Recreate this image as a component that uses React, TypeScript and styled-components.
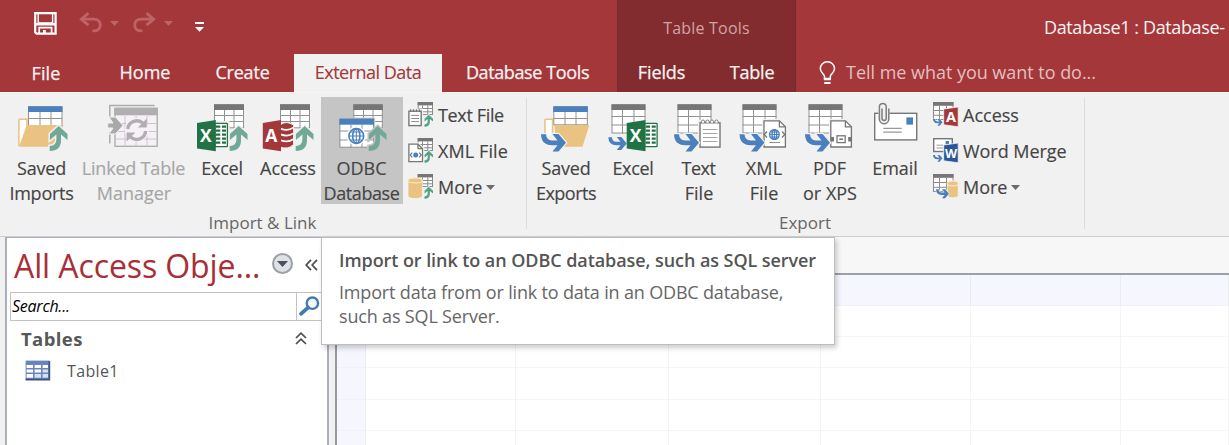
import React, { ReactNode } from 'react';
import styled, { createGlobalStyle, css } from 'styled-components';

const GlobalStyle = createGlobalStyle`
  * { box-sizing: border-box; }
  html, body { margin: 0; background: #fff; overflow: hidden; }
  body { font-family: "Open Sans", "Noto Sans", sans-serif; font-size: 18px; color: #444; }
  svg { display: block; overflow: visible; flex: none; }
`;

const RED = '#a4373a';
const GREY = '#767676';
const BLUE = '#4a80bd';
const GREEN = '#72a897';
const TAN = '#eac282';

const Window = styled.div`
  position: relative;
  width: 1229px;
  height: 445px;
  display: flex;
  flex-direction: column;
  overflow: hidden;
  background: #f1f1f1;
`;

/* ---------- title bar and tabs ---------- */
const Header = styled.header`
  display: grid;
  grid-template-columns: 617px 179px 1fr;
  height: 92px;
  flex: none;
  color: #fbf3f3;
  background: ${RED};
`;
const HeaderSection = styled.div<{ $context?: boolean }>`
  display: flex;
  flex-direction: column;
  ${(p) => p.$context && css`
    background: #822c2f;
    border-left: 1px solid #76282b;
    border-right: 1px solid #76282b;
  `}
`;
const TitleRow = styled.div`
  display: flex;
  height: 54px;
  line-height: 55px;
  white-space: nowrap;
`;
const QuickAccess = styled(TitleRow)`
  padding: 12px 0 0 34px;
  svg { margin-right: 8px; }
`;
const ContextTitle = styled(TitleRow)`
  justify-content: center;
  font-size: 16px;
  letter-spacing: 0.2px;
  line-height: 56px;
  color: #d3a3a4;
`;
const DocTitle = styled(TitleRow)`
  padding-left: 248px;
  letter-spacing: -0.38px;
`;
const TabRow = styled.nav`
  display: flex;
  height: 38px;
`;
const Tab = styled.div<{ $w: number; $ls?: number; $active?: boolean; $gap?: number; $drop?: number }>`
  flex: none;
  width: ${(p) => p.$w}px;
  margin-right: ${(p) => p.$gap ?? 0}px;
  padding-top: ${(p) => p.$drop ?? 0}px;
  letter-spacing: ${(p) => p.$ls ?? 0}px;
  line-height: 37px;
  text-align: center;
  white-space: nowrap;
  -webkit-text-stroke: ${(p) => (p.$active ? 0.1 : 0.25)}px;
  ${(p) => p.$active && css`
    background: #f1f1f1;
    color: ${RED};
  `}
`;
const TellMe = styled.div`
  display: flex;
  align-items: center;
  gap: 10px;
  padding-left: 23px;
  line-height: 37px;
  letter-spacing: -0.03px;
  color: #e3bfc0;
  white-space: nowrap;
`;

/* ---------- ribbon ---------- */
const Ribbon = styled.section`
  display: flex;
  height: 145px;
  flex: none;
  padding-top: 4px;
  background: #f1f1f1;
  border-top: 1px solid #f8f4f4;
  border-bottom: 1px solid #cfcfcf;
`;
const Group = styled.div<{ $w: number }>`
  width: ${(p) => p.$w}px;
  display: flex;
  flex-direction: column;
`;
const GroupItems = styled.div`
  display: flex;
  height: 114px;
`;
const GroupLabel = styled.div`
  padding-right: 1px;
  text-align: center;
  font-size: 17px;
  line-height: 24px;
  color: #666;
`;
const Separator = styled.div`
  width: 1px;
  height: 131px;
  margin-top: 1px;
  background: #dcdcdc;
`;
const LargeButton = styled.div<{ $w: number; $before?: number; $pressed?: boolean; $disabled?: boolean }>`
  width: ${(p) => p.$w}px;
  height: 107px;
  margin-left: ${(p) => p.$before ?? 0}px;
  padding-top: 7px;
  display: flex;
  flex-direction: column;
  align-items: center;
  background: ${(p) => (p.$pressed ? '#c5c5c5' : 'transparent')};
  color: ${(p) => (p.$disabled ? '#a6a6a6' : '#444')};
  svg { margin-bottom: 4px; }
`;
const Label = styled.span<{ $ls?: number; $end?: number }>`
  height: 25px;
  padding-right: ${(p) => p.$end ?? 0}px;
  line-height: 25px;
  white-space: nowrap;
  letter-spacing: ${(p) => p.$ls ?? 0}px;
  -webkit-text-stroke: 0.15px;
`;
const SmallColumn = styled.div<{ $before: number }>`
  display: flex;
  flex-direction: column;
  margin-left: ${(p) => p.$before}px;
`;
const SmallButton = styled.div`
  display: flex;
  align-items: center;
  gap: 4px;
  height: 36px;
`;

/* ---------- body ---------- */
const Body = styled.main`
  display: flex;
  flex: 1;
  min-height: 0;
`;
const NavPane = styled.aside`
  width: 324px;
  margin-left: 5px;
  background: #fff;
  border: 2px solid #a9afba;
  border-top-width: 1px;
  border-bottom: 0;
`;
const NavTitle = styled.div`
  display: flex;
  align-items: center;
  height: 54px;
  padding-left: 7px;
  color: #a92f37;
  font-size: 32px;
`;
const NavName = styled.span`
  width: 258px;
  letter-spacing: -0.1px;
  white-space: nowrap;
`;
const CircleButton = styled.span`
  display: grid;
  place-items: center;
  width: 21px;
  height: 21px;
  margin: -3px 12px 0 0;
  border: 2px solid #9a9fa8;
  border-radius: 50%;
  background: #dfe1e5;
`;
const SearchBox = styled.div`
  display: flex;
  height: 29px;
  margin-left: 3px;
  border: 1px solid #c3c3c3;
  border-right: 0;
`;
const SearchField = styled.span`
  width: 286px;
  padding-left: 1px;
  border-right: 1px solid #c3c3c3;
  color: #000;
  font-size: 16px;
  font-style: italic;
  letter-spacing: -0.25px;
  line-height: 26px;
`;
const SearchButton = styled.span`
  padding: 3px 0 0 2px;
`;
const NavGroup = styled.div`
  display: flex;
  align-items: center;
  justify-content: space-between;
  height: 34px;
  padding: 0 20px 0 14px;
  font-size: 18.5px;
  font-weight: 700;
  letter-spacing: 0.4px;
  color: #585858;
`;
const NavItem = styled.div`
  display: flex;
  align-items: center;
  gap: 17px;
  height: 31px;
  padding-left: 18px;
  font-size: 16px;
  letter-spacing: 0.35px;
  color: #555;
`;
const Sheet = styled.section`
  flex: 1;
  margin-left: 6px;
  display: flex;
  flex-direction: column;
  border-left: 2px solid #9299a2;
`;
const SheetBar = styled.div`
  height: 36px;
  flex: none;
  background: #f7f7f7;
`;
const Grid = styled.div`
  flex: 1;
  display: grid;
  grid-template-columns: 29px 150px 153px 152px 150px 150px 1fr;
  grid-template-rows: 31px repeat(5, 31.2px);
  border-top: 2px solid #9aa1a9;
  overflow: hidden;
`;
const Cell = styled.span<{ $head: boolean }>`
  background: ${(p) => (p.$head ? '#f6f7fe' : '#fff')};
  border-right: 1px solid ${(p) => (p.$head ? '#ebecf0' : '#f4f4f4')};
  border-bottom: 1px solid ${(p) => (p.$head ? '#f0f1f6' : '#f5f5f5')};
`;
const Tooltip = styled.div`
  position: absolute;
  left: 321px;
  top: 237px;
  width: 514px;
  height: 108px;
  padding: 10px 0 0 17px;
  background: #fff;
  border: 1px solid #bebebe;
  box-shadow: 2px 3px 5px rgba(0, 0, 0, 0.2);
  color: #666;
  white-space: nowrap;
`;
const TooltipTitle = styled.div`
  font-weight: 600;
  color: #555;
  letter-spacing: -0.07px;
  line-height: 24px;
  margin-bottom: 9px;
`;
const TooltipText = styled.div`
  line-height: 23.5px;
  letter-spacing: -0.17px;
`;

/* ---------- icon parts ---------- */
const Large = ({ children }: { children: ReactNode }) => (
  <svg width="52" height="48" viewBox="0 0 52 48" fill="none">{children}</svg>
);
const Small = ({ children }: { children: ReactNode }) => (
  <svg width="26" height="26" viewBox="0 0 26 26" fill="none">{children}</svg>
);
type GridProps = { x: number; y: number; w: number; h: number; head: number; cols: number[]; rows: number[]; color?: string; line?: string };
const TableShape = ({ x, y, w, h, head, cols, rows, color = GREY, line = '#929292' }: GridProps) => (
  <g>
    <rect x={x + 0.5} y={y + 0.5} width={w - 1} height={h - 1} fill="#fff" stroke={line} />
    {cols.map((c) => <path key={c} d={`M${c} ${y + head}V${y + h}`} stroke={line} />)}
    {rows.map((r) => <path key={r} d={`M${x} ${r}H${x + w}`} stroke={line} />)}
    <rect x={x} y={y} width={w} height={head} fill={color} />
  </g>
);
const UpArrow = ({ x = 42.7, halo = '#f1f1f1', s = 1, y = 22, color = GREEN }: { x?: number; y?: number; halo?: string; s?: number; color?: string }) => {
  const d = 'M-9 24.6V20Q-2.3 19.8 -2.3 13.6V8.6L-8.8 14V8L0 0L8.8 8V14L2.3 8.6V14Q2.3 25 -9 25Z';
  return (
    <g transform={`translate(${x} ${y}) scale(${s})`}>
      <path d={d} stroke={halo} strokeWidth={3} />
      <path d={d} fill={color} />
    </g>
  );
};
const RightArrow = ({ x = 1, y = 30, s = 1, halo = '#f1f1f1' }: { x?: number; y?: number; s?: number; halo?: string }) => {
  const d = 'M0 0.3H5Q5.4 6.4 11 6.4H16.5L11.5 0H17.5L25 8.7L17.5 17.5H11.5L16.5 11.2H11Q0.4 11.2 0 0.3Z';
  return (
    <g transform={`translate(${x} ${y}) scale(${s})`}>
      <path d={d} stroke={halo} strokeWidth={2.4} />
      <path d={d} fill={BLUE} />
    </g>
  );
};
const Globe = ({ x, y, r }: { x: number; y: number; r: number }) => (
  <g transform={`translate(${x} ${y}) scale(${r / 8})`} stroke={BLUE} strokeWidth={8 / r + 0.6}>
    <circle r="7.4" fill="#fff" />
    <ellipse rx="3.6" ry="7.4" />
    <path d="M0 -7.4V7.4M-7.4 0H7.4M-6.2 -4H6.2M-6.2 4H6.2" strokeWidth={8 / r} />
  </g>
);
const Letter = ({ x, y, size, children }: { x: number; y: number; size: number; children: string }) => (
  <text x={x} y={y} fontSize={size} fontWeight="700" fill="#fff" textAnchor="middle">{children}</text>
);
const ExcelLogo = ({ x = 0 }: { x?: number }) => (
  <g transform={`translate(${x} 0)`}>
    <rect x="18" y="17" width="15.5" height="28" fill="#f1f1f1" />
    <rect x="19" y="19.3" width="12.4" height="23.4" rx="0.8" fill="#fff" stroke="#217346" strokeWidth="1.3" />
    <path d="M20 22.6H24.3M20 26.6H24.3M20 30.6H24.3M20 34.6H24.3M20 38.6H24.3M26 22.6H30M26 26.6H30M26 30.6H30M26 34.6H30M26 38.6H30" stroke="#217346" strokeWidth="2.2" />
    <path d="M1 19L19.8 16V47.3L1 44.5Z" fill="#217346" />
    <Letter x={9.8} y={38.2} size={17.5}>X</Letter>
  </g>
);
const AccessLogo = () => (
  <g>
    <path d="M18 21Q24 16 31.6 21V40.5Q26 46 18 43Z" fill={RED} stroke="#f1f1f1" strokeWidth="1" />
    <path d="M18.5 24.6Q26 27.5 31.2 23.6M18.5 30.4Q26 33.2 31.2 29.4M18.5 36.2Q26 39 31.2 35.2" stroke="#fff" strokeWidth="1.7" />
    <path d="M0.8 19L19 16V47.3L0.8 44.5Z" fill={RED} />
    <Letter x={9.4} y={38.2} size={17.5}>A</Letter>
  </g>
);
const ImportTable = () => <TableShape x={18} y={0.3} w={30} h={24} head={5.7} cols={[28.5, 38]} rows={[11.5, 17.5]} />;
const ExportTable = () => <TableShape x={4.5} y={0.3} w={34} h={29.2} head={5.7} cols={[15.5, 27]} rows={[12.5, 21]} />;
const Page = ({ x, y, w, h, fold }: { x: number; y: number; w: number; h: number; fold: number }) => (
  <g>
    <path d={`M${x} ${y}H${x + w - fold}L${x + w} ${y + fold}V${y + h}H${x}Z`} stroke="#f1f1f1" strokeWidth="3.5" />
    <path d={`M${x} ${y}H${x + w - fold}L${x + w} ${y + fold}V${y + h}H${x}Z`} fill="#fff" stroke={GREY} strokeWidth="1.3" />
    <path d={`M${x + w - fold} ${y}V${y + fold}H${x + w}`} stroke={GREY} strokeWidth="1.3" />
  </g>
);
const Cylinder = ({ x, y, w, h }: { x: number; y: number; w: number; h: number }) => (
  <g>
    <path d={`M${x} ${y + 2.5}V${y + h - 2.5}A${w / 2} 2.5 0 0 0 ${x + w} ${y + h - 2.5}V${y + 2.5}Z`} fill={TAN} stroke="#f1f1f1" strokeWidth="0.8" />
    <ellipse cx={x + w / 2} cy={y + 2.6} rx={w / 2} ry="2.5" fill={TAN} stroke="#f8e8cb" strokeWidth="1.1" />
  </g>
);
const SmallImportTable = () => <TableShape x={9.7} y={0} w={15.3} h={13} head={3.4} cols={[14.5, 19.8]} rows={[6.5, 9.8]} line="#8a8a8a" />;
const SmallExportTable = () => <TableShape x={0} y={0} w={20.5} h={18} head={3.8} cols={[6.5, 13.5]} rows={[8.5, 13.3]} line="#8a8a8a" />;
const SmallUp = () => <UpArrow x={20.8} y={12.8} s={0.48} color="#55a386" />;
const Caret = ({ color = '#6b6b6b' }: { color?: string }) => (
  <svg width="9" height="5" viewBox="0 0 9 5"><path d="M0 0H9L4.5 5Z" fill={color} /></svg>
);

/* ---------- icons ---------- */
const SavedImportsIcon = () => (
  <Large>
    <path d="M2.9 42V16Q2.9 15.2 3.8 15.2H11V30" fill="#fff" stroke={TAN} strokeWidth="1.5" />
    <TableShape x={12} y={2.3} w={34.5} h={20} head={5.7} cols={[24, 35]} rows={[14.5]} color={BLUE} />
    <path d="M10.8 21H47.5L39.5 42.7H3Z" fill={TAN} />
    <UpArrow />
  </Large>
);
const LinkedTableIcon = () => (
  <Large>
    <path d="M1.8 14V1.5H46.7M1.8 28V39.5" stroke="#adadad" strokeWidth="1.5" />
    <rect x="7" y="4.5" width="42.2" height="37.8" fill="#f6f1f7" stroke="#b0aeb0" strokeWidth="1.4" />
    <path d="M7 19.5H49M7 27.5H49M7 35H49M17 12V42M28 12V42M39 12V42" stroke="#cbc6cc" />
    <rect x="6.3" y="3.7" width="43.4" height="7.6" fill="#b0aeb0" />
    <path d="M-0.3 19H5L1 13H7.5L15 21.5L7.5 30H1L5 24H-0.3Z" fill="#a9a9a9" stroke="#f1f1f1" />
    <circle cx="28.7" cy="26" r="12" fill="#f6f1f7" />
    <path d="M19.8 25A9 9 0 0 1 35 19.3M37.6 27A9 9 0 0 1 22.3 32.8" stroke="#b0aeb0" strokeWidth="3.4" />
    <path d="M38.8 14.5V23.5H30ZM18.6 37.5V28.5H27.4Z" fill="#b0aeb0" />
  </Large>
);
const ImportExcelIcon = () => <Large><ImportTable /><ExcelLogo /><UpArrow /></Large>;
const ImportAccessIcon = () => <Large><ImportTable /><AccessLogo /><UpArrow /></Large>;
const OdbcIcon = () => (
  <Large>
    <TableShape x={17.3} y={0.3} w={29.5} h={24} head={5.7} cols={[27.5, 37]} rows={[11.5, 17.5]} />
    <rect x="2.3" y="13.6" width="36.8" height="31" fill="#c5c5c5" />
    <TableShape x={3.4} y={14.7} w={34.6} h={29} head={6} cols={[15, 26]} rows={[27, 36]} color={BLUE} />
    <circle cx="20.3" cy="32" r="9.6" fill="#fff" />
    <Globe x={20.3} y={32} r={8} />
    <UpArrow x={41.7} halo="#c5c5c5" />
  </Large>
);
const SavedExportsIcon = () => (
  <Large>
    <path d="M4.9 34V16Q4.9 15.2 5.8 15.2H12.5V30" fill="#fff" stroke={TAN} strokeWidth="1.5" />
    <TableShape x={13.3} y={2.3} w={34.5} h={19} head={5.7} cols={[25, 36]} rows={[14.5]} color={BLUE} />
    <path d="M14.5 21H49.3L42.5 42.7H16Z" fill={TAN} />
    <RightArrow />
  </Large>
);
const ExportExcelIcon = () => <Large><ExportTable /><RightArrow x={1.3} y={33} s={0.74} /><ExcelLogo x={18.7} /></Large>;
const ExportTextIcon = () => (
  <Large>
    <ExportTable />
    <rect x="25" y="16" width="24" height="29" fill="#f1f1f1" />
    <rect x="27" y="18.8" width="20" height="24.3" fill="#fff" stroke={GREY} strokeWidth="1.4" />
    <path d="M30 25.5H44.5M30 29.5H44.5M30 33.5H44.5M30 37.5H44.5" stroke="#a5a5a5" strokeWidth="1.1" />
    <path d="M28.5 18.8a1.7 1.9 0 1 1 3 0M33 18.8a1.7 1.9 0 1 1 3 0M37.5 18.8a1.7 1.9 0 1 1 3 0M42 18.8a1.7 1.9 0 1 1 3 0" fill="#fff" stroke={GREY} />
    <RightArrow />
  </Large>
);
const ExportXmlIcon = () => (
  <Large>
    <ExportTable />
    <Page x={26} y={16.8} w={21.4} h={26.2} fold={6} />
    <Globe x={36.4} y={30.5} r={5.2} />
    <path d="M29 27.5L26.2 30.5L29 33.5M44 27.5L46.8 30.5L44 33.5" stroke={GREY} strokeWidth="1.3" />
    <path d="M31.5 38.5H42" stroke="#8f8f8f" />
    <RightArrow x={1.5} />
  </Large>
);
const ExportPdfIcon = () => (
  <Large>
    <ExportTable />
    <Page x={26.8} y={16.8} w={20.6} h={26.2} fold={6} />
    <rect x="33" y="31.8" width="8.2" height="6.8" stroke={GREY} strokeWidth="1.3" />
    <path d="M35.3 35.2H39" stroke={GREY} strokeWidth="1.6" />
    <path d="M27 35.2h3M44.2 35.2h3" stroke={GREY} strokeWidth="4.4" />
    <RightArrow />
  </Large>
);
const EmailIcon = () => (
  <Large>
    <rect x="5.7" y="9.3" width="42" height="26.6" fill="#fff" stroke={GREY} strokeWidth="1.4" />
    <rect x="37.4" y="13.4" width="6.6" height="7.2" fill={BLUE} />
    <path d="M14.3 24.4H32.8M14.3 28.1H32.8" stroke="#999" strokeWidth="1.2" />
    <rect x="9.3" y="-2.4" width="11.2" height="23.3" rx="5.6" fill="#f1f1f1" />
    <path d="M13 4.5V14.3a2.1 2.1 0 0 0 4.2 0V2.8a3.4 3.4 0 0 0 -6.8 0V15a4.7 4.7 0 0 0 9.4 0V4.5" stroke="#7d7d7d" strokeWidth="1.5" />
  </Large>
);
const ImportTextIcon = () => (
  <Small>
    <SmallImportTable />
    <rect x="-0.6" y="6.5" width="15.6" height="19" fill="#f1f1f1" />
    <rect x="0.9" y="9.2" width="12.3" height="14.4" fill="#fff" stroke={GREY} strokeWidth="1.4" />
    <path d="M3.2 13.4H11M3.2 16.5H11M3.2 19.6H11" stroke="#8a8a8a" />
    <path d="M2.6 7.2V10M5.5 7.2V10M8.5 7.2V10M11.4 7.2V10" stroke={GREY} strokeWidth="1.2" />
    <SmallUp />
  </Small>
);
const ImportXmlIcon = () => (
  <Small>
    <SmallImportTable />
    <Page x={0.9} y={6.2} w={13.6} h={17.4} fold={4.5} />
    <circle cx="7.7" cy="17" r="2.5" fill={BLUE} />
    <path d="M4.2 14.7L2.2 17L4.2 19.3M11.2 14.7L13.2 17L11.2 19.3" stroke={GREY} strokeWidth="1.2" />
    <SmallUp />
  </Small>
);
const ImportMoreIcon = () => <Small><SmallImportTable /><Cylinder x={0} y={3.8} w={14.4} h={20.8} /><SmallUp /></Small>;
const SmallLogo = ({ letter, color }: { letter: string; color: string }) => (
  <g>
    <path d="M10.7 7L25.2 5V24.8L10.7 22.8Z" fill={color} stroke="#f1f1f1" strokeWidth="0.8" />
    <Letter x={18} y={20} size={letter === 'W' ? 12.5 : 14.5}>{letter}</Letter>
  </g>
);
const ExportAccessIcon = () => <Small><SmallExportTable /><SmallLogo letter="A" color={RED} /><RightArrow x={0} y={17} s={0.38} /></Small>;
const WordMergeIcon = () => (
  <Small>
    <rect x="0.7" y="0.7" width="18.6" height="12.8" fill="#fff" stroke={GREY} strokeWidth="1.4" />
    <path d="M3.5 7.2H10M3.5 10H10" stroke="#999" />
    <rect x="12.6" y="3" width="3.4" height="3.4" fill={BLUE} />
    <SmallLogo letter="W" color="#2b579a" />
    <RightArrow x={0} y={17} s={0.38} />
  </Small>
);
const ExportMoreIcon = () => <Small><SmallExportTable /><Cylinder x={14.3} y={6.8} w={10.9} h={17} /><RightArrow x={3} y={15.2} s={0.52} /></Small>;

const SaveIcon = () => (
  <svg width="23" height="23" viewBox="0 0 23 23" fill="none">
    <path d="M1.2 1.2H21.6V21.6H2.6L1.2 20.2Z" stroke="#fff" strokeWidth="2.2" />
    <path d="M4.2 2V11H18.6V2" stroke="#fff" strokeWidth="1.4" />
    <path d="M1.3 12.2H21.5" stroke="#fff" strokeWidth="2.6" />
    <path d="M5.2 22V15.6H17.6V22" stroke="#fff" strokeWidth="1.7" />
    <path d="M9 18H11.8V22H9Z" fill="#fff" />
  </svg>
);
const UndoIcon = ({ flip = false }: { flip?: boolean }) => (
  <svg width="23" height="21" viewBox="0 0 23 21" fill="none">
    <g transform={flip ? 'translate(23 0) scale(-1 1)' : undefined} stroke="#be6466" strokeWidth="2.8">
      <path d="M9.5 1.2L2.3 7.2L9.5 13.2" />
      <path d="M2.5 7.2H14.5C19.5 7.2 21.3 10.2 21.3 13.2C21.3 17 18.5 19.2 13.5 18.8" />
    </g>
  </svg>
);
const SaveButton = styled.span`
  padding-right: 14px;
`;
const QuickCaret = styled.span`
  padding: 9px 6px 0 0;
`;
const CustomizeIcon = () => (
  <svg width="9" height="10" viewBox="0 0 9 10"><path d="M0 0H9V2H0ZM0 5H9L4.5 9.8Z" fill="#fff" /></svg>
);
const CustomizeButton = styled.span`
  padding: 10px 0 0 8px;
`;
const BulbIcon = () => (
  <svg width="17" height="24" viewBox="0 0 17 24" fill="none" stroke="#fff" strokeWidth="1.5">
    <path d="M5.5 17.5V15.4C5.2 12.7 1.3 11.6 1.3 7.6A7 6.8 0 0 1 15.5 7.6C15.5 11.6 11.6 12.7 11.3 15.4V17.5Z" />
    <path d="M4.8 18.2H12M5.3 22H11.5" strokeWidth="1.9" />
  </svg>
);
const CollapseIcon = () => (
  <svg width="13" height="13" viewBox="0 0 13 13" fill="none" stroke="#4c4c4c" strokeWidth="1.7">
    <path d="M6 0.8L1.2 6L6 11.2M12 0.8L7.2 6L12 11.2" />
  </svg>
);
const ChevronsUpIcon = () => (
  <svg width="12" height="13" viewBox="0 0 12 13" fill="none" stroke="#4c4c4c" strokeWidth="1.7">
    <path d="M1 6L6 1.2L11 6M1 12L6 7.2L11 12" />
  </svg>
);
const SearchIcon = () => (
  <svg width="21" height="20" viewBox="0 0 21 20" fill="none" stroke="#447ab0">
    <circle cx="13.4" cy="7.2" r="5.7" strokeWidth="2.4" fill="#f4f8fc" />
    <path d="M9 11.6L2 17.8" strokeWidth="3.8" strokeLinecap="round" />
  </svg>
);
const DatasheetIcon = () => (
  <svg width="25" height="21" viewBox="0 0 25 21" fill="none">
    <rect x="0.6" y="0.6" width="23.8" height="19.4" fill="#6c87b8" />
    <path d="M1 1H24V3.4H1Z" fill="#6484c4" />
    <path d="M1.6 5H8V8H1.6ZM9.6 5H16V8H9.6ZM17.6 5H23V8H17.6ZM1.6 9.4H8V12.6H1.6ZM9.6 9.4H16V12.6H9.6ZM1.6 14H8V17.8H1.6Z" fill="#fff" />
    <path d="M17.6 9.4H23V12.6H17.6ZM9.6 14H16V17.8H9.6ZM17.6 14H23V17.8H17.6Z" fill="#d5e0f2" />
    <path d="M0.6 19.6H24.4V1" stroke="#3a5480" strokeWidth="1.6" />
  </svg>
);

const gridCells = Array.from({ length: 42 }, (_, i) => i < 7 || i % 7 === 0);

export default function App() {
  return (
    <Window>
      <GlobalStyle />
      <Header>
        <HeaderSection>
          <QuickAccess>
            <SaveButton><SaveIcon /></SaveButton>
            <UndoIcon />
            <QuickCaret><Caret color="#be6466" /></QuickCaret>
            <UndoIcon flip />
            <QuickCaret><Caret color="#be6466" /></QuickCaret>
            <CustomizeButton><CustomizeIcon /></CustomizeButton>
          </QuickAccess>
          <TabRow>
            <Tab $w={92} $drop={1} $ls={0.1}>File</Tab>
            <Tab $w={106}>Home</Tab>
            <Tab $w={89} $gap={7} $ls={-0.2}>Create</Tab>
            <Tab $w={148} $ls={-0.5} $active>External Data</Tab>
            <Tab $w={171} $ls={-0.38}>Database Tools</Tab>
          </TabRow>
        </HeaderSection>
        <HeaderSection $context>
          <ContextTitle>Table Tools</ContextTitle>
          <TabRow>
            <Tab $w={87} $ls={-0.1}>Fields</Tab>
            <Tab $w={94} $ls={-0.2}>Table</Tab>
          </TabRow>
        </HeaderSection>
        <HeaderSection>
          <DocTitle>Database1 : Database-</DocTitle>
          <TellMe><BulbIcon />Tell me what you want to do...</TellMe>
        </HeaderSection>
      </Header>

      <Ribbon>
        <Group $w={526}>
          <GroupItems>
            <LargeButton $w={78} $before={3}><SavedImportsIcon /><Label $ls={-0.2} $end={1}>Saved</Label><Label $ls={-0.25} $end={1}>Imports</Label></LargeButton>
            <LargeButton $w={106} $disabled><LinkedTableIcon /><Label $ls={-0.2} $end={1}>Linked Table</Label><Label>Manager</Label></LargeButton>
            <LargeButton $w={70}><ImportExcelIcon /><Label $ls={-0.25}>Excel</Label></LargeButton>
            <LargeButton $w={62}><ImportAccessIcon /><Label>Access</Label></LargeButton>
            <LargeButton $w={82} $before={2} $pressed><OdbcIcon /><Label $end={1}>ODBC</Label><Label $ls={-0.4} $end={1}>Database</Label></LargeButton>
            <SmallColumn $before={5}>
              <SmallButton><ImportTextIcon /><Label $ls={-0.35}>Text File</Label></SmallButton>
              <SmallButton><ImportXmlIcon /><Label $ls={0.1}>XML File</Label></SmallButton>
              <SmallButton><ImportMoreIcon /><Label>More</Label><Caret /></SmallButton>
            </SmallColumn>
          </GroupItems>
          <GroupLabel>Import &amp; Link</GroupLabel>
        </Group>
        <Separator />
        <Group $w={557}>
          <GroupItems>
            <LargeButton $w={78}><SavedExportsIcon /><Label $ls={-0.2}>Saved</Label><Label $ls={-0.5}>Exports</Label></LargeButton>
            <LargeButton $w={56}><ExportExcelIcon /><Label $ls={-0.3}>Excel</Label></LargeButton>
            <LargeButton $w={76}><ExportTextIcon /><Label $ls={-0.5} $end={1}>Text</Label><Label>File</Label></LargeButton>
            <LargeButton $w={54}><ExportXmlIcon /><Label $ls={0.2}>XML</Label><Label>File</Label></LargeButton>
            <LargeButton $w={78}><ExportPdfIcon /><Label $end={1}>PDF</Label><Label>or XPS</Label></LargeButton>
            <LargeButton $w={52}><EmailIcon /><Label $ls={-0.1}>Email</Label></LargeButton>
            <SmallColumn $before={12}>
              <SmallButton><ExportAccessIcon /><Label>Access</Label></SmallButton>
              <SmallButton><WordMergeIcon /><Label $ls={-0.05}>Word Merge</Label></SmallButton>
              <SmallButton><ExportMoreIcon /><Label>More</Label><Caret /></SmallButton>
            </SmallColumn>
          </GroupItems>
          <GroupLabel>Export</GroupLabel>
        </Group>
        <Separator />
      </Ribbon>

      <Body>
        <NavPane>
          <NavTitle>
            <NavName>All Access Obje...</NavName>
            <CircleButton><svg width="11" height="6" viewBox="0 0 11 6"><path d="M0 0H11L5.5 6Z" fill="#4b4f66" /></svg></CircleButton>
            <CollapseIcon />
          </NavTitle>
          <SearchBox>
            <SearchField>Search...</SearchField>
            <SearchButton><SearchIcon /></SearchButton>
          </SearchBox>
          <NavGroup>Tables<ChevronsUpIcon /></NavGroup>
          <NavItem><DatasheetIcon />Table1</NavItem>
        </NavPane>
        <Sheet>
          <SheetBar />
          <Grid>{gridCells.map((head, i) => <Cell key={i} $head={head} />)}</Grid>
        </Sheet>
      </Body>

      <Tooltip>
        <TooltipTitle>Import or link to an ODBC database, such as SQL server</TooltipTitle>
        <TooltipText>Import data from or link to data in an ODBC database,<br />such as SQL Server.</TooltipText>
      </Tooltip>
    </Window>
  );
}
